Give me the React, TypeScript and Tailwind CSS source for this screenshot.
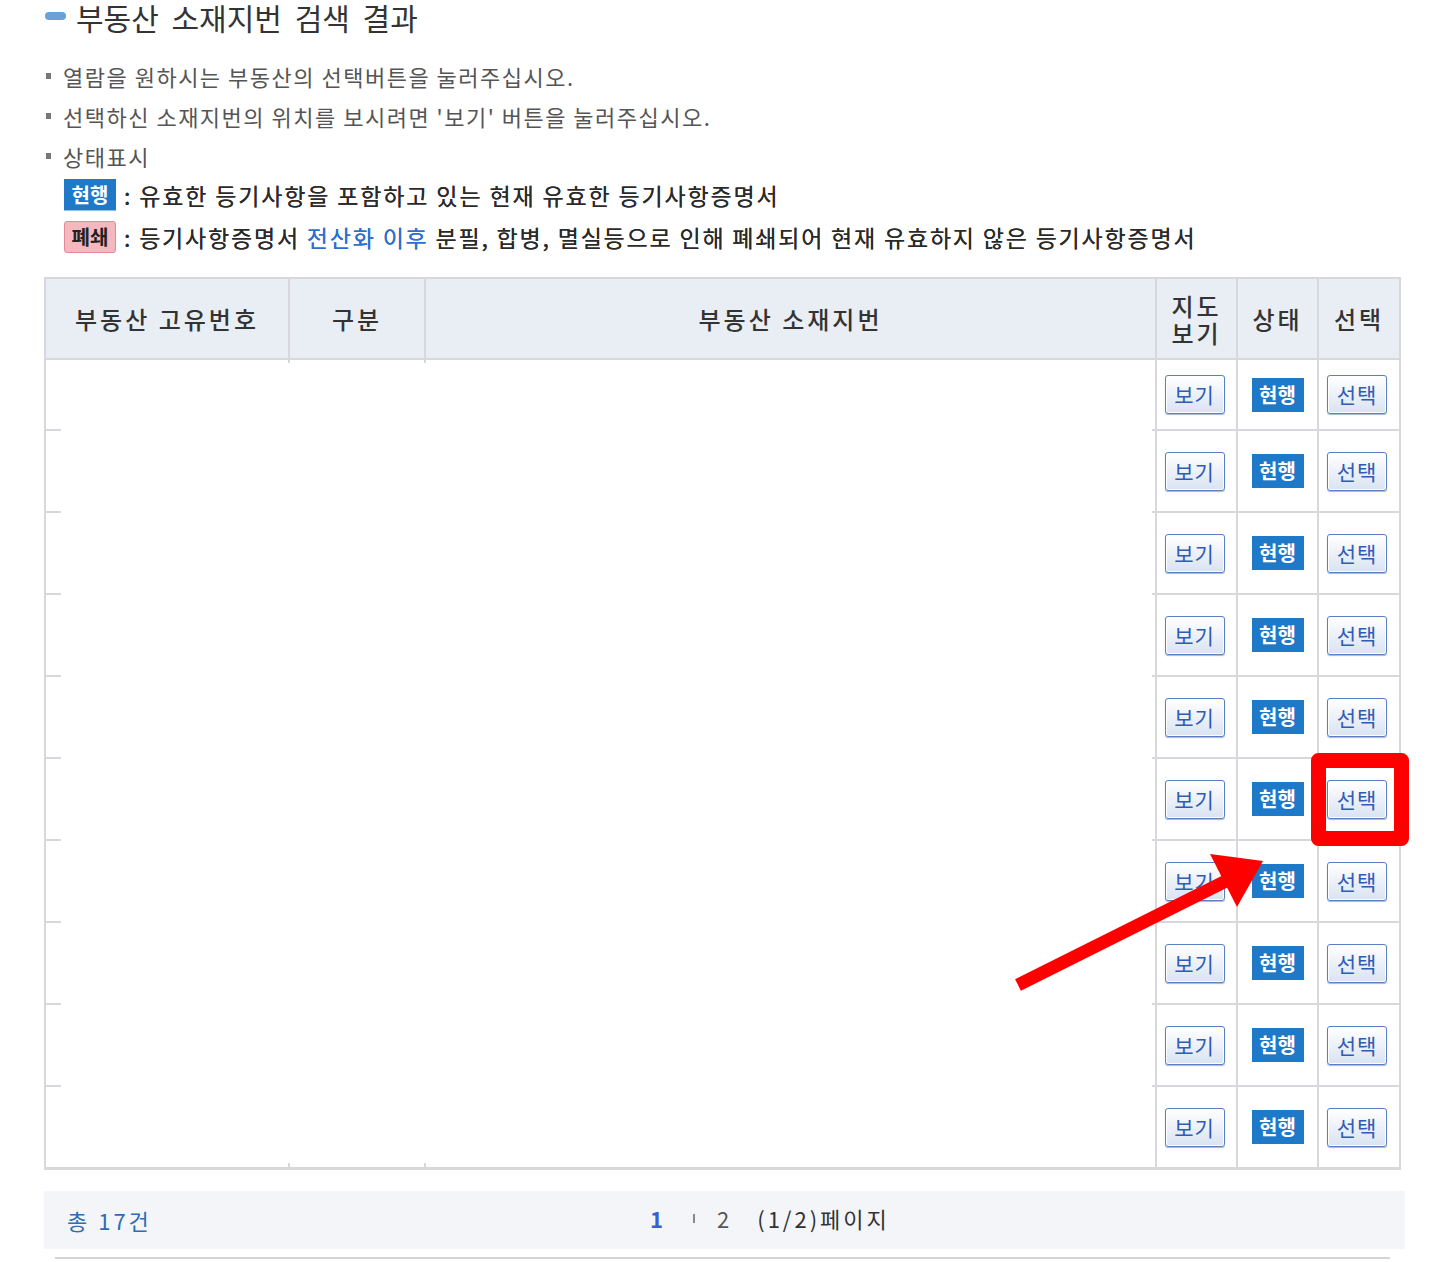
import React from "react";

const BORDER = "border-[#d7d7dc]";

function Btn({ label }: { label: string }) {
  return (
    <div className="flex h-[39px] w-[60px] items-center justify-center rounded-[3px] border border-[#5a7fc2] bg-linear-to-b from-white to-[#d9e3f2] text-[21px] leading-none tracking-[1px] text-[#2f5cb4] shadow-[inset_0_0_0_1px_rgba(255,255,255,0.95),0_1px_1px_rgba(60,90,150,0.45)]">
      {label}
    </div>
  );
}

function Badge() {
  return (
    <div className="flex h-[34px] w-[52px] items-center justify-center bg-[#1f79c9] text-[20px] font-bold leading-none text-white">
      현행
    </div>
  );
}

function Row({ index, total }: { index: number; total: number }) {
  const first = index === 0;
  const last = index === total - 1;
  const h = first ? "h-[71px]" : last ? "h-[80px]" : "h-[82px]";
  const rb = last ? "" : "border-b-2";
  return (
    <div className={`flex ${h}`}>
      <div className="flex w-[1109px] flex-col justify-between">
        {first ? (
          <div className="flex">
            <div className="w-[242px]" />
            <div className="h-[3px] w-[2px] bg-[#d7d7dc]" />
            <div className="w-[134px]" />
            <div className="h-[3px] w-[2px] bg-[#d7d7dc]" />
          </div>
        ) : (
          <div />
        )}
        {last ? (
          <div className="flex">
            <div className="w-[242px]" />
            <div className="h-[4px] w-[2px] bg-[#d7d7dc]" />
            <div className="w-[134px]" />
            <div className="h-[4px] w-[2px] bg-[#d7d7dc]" />
          </div>
        ) : (
          <div className="flex justify-between">
            <div className="h-[2px] w-[15px] bg-[#d7d7dc]" />
            <div className="h-[2px] w-[3px] bg-[#d7d7dc]" />
          </div>
        )}
      </div>
      <div className={`flex w-[81px] items-center justify-center border-l-2 ${rb} ${BORDER} pr-[4px]`}>
        <Btn label="보기" />
      </div>
      <div className={`flex w-[81px] items-center justify-center border-l-2 ${rb} ${BORDER}`}>
        <Badge />
      </div>
      <div className={`flex w-[82px] items-center justify-center border-l-2 ${rb} ${BORDER} pr-[4px]`}>
        <Btn label="선택" />
      </div>
    </div>
  );
}

export default function App() {
  const rows = Array.from({ length: 10 }, (_, i) => i);
  const head =
    "flex items-center justify-center text-[24px] tracking-[3px] font-medium text-[#333]";
  return (
    <div className="relative h-[1262px] w-[1438px] overflow-hidden bg-white font-['Noto_Sans_CJK_KR',sans-serif]">
      {/* Title */}
      <div className="-mt-[3px] flex h-[40px] items-center pl-[45px]">
        <div className="mt-[-2px] h-[8px] w-[21px] rounded-full bg-[#6aa1d6]" />
        <div className="ml-[10px] text-[30px] leading-none text-[#333] [word-spacing:6px]">
          부동산 소재지번 검색 결과
        </div>
      </div>

      {/* Bullets */}
      <div className="mt-[19px]">
        {[
          "열람을 원하시는 부동산의 선택버튼을 눌러주십시오.",
          "선택하신 소재지번의 위치를 보시려면 '보기' 버튼을 눌러주십시오.",
          "상태표시",
        ].map((t) => (
          <div key={t} className="flex h-[40px] items-center pl-[46px]">
            <div className="mr-[12px] h-[6px] w-[5px] bg-[#777]" />
            <div className="text-[22px] leading-none tracking-[1.5px] text-[#555]">{t}</div>
          </div>
        ))}
      </div>

      {/* Legend */}
      <div className="-mt-[2px]">
        <div className="flex h-[42px] items-center pl-[64px]">
          <div className="flex h-[32px] w-[52px] items-center justify-center border-b border-[#8fc0ea] bg-[#1f79c9] text-[20px] font-bold leading-none text-white">
            현행
          </div>
          <div className="ml-[8px] text-[23px] font-normal leading-none tracking-[1.85px] text-[#2a2a2a] [text-shadow:0_0_0.3px_#333]">
            : 유효한 등기사항을 포함하고 있는 현재 유효한 등기사항증명서
          </div>
        </div>
        <div className="flex h-[42px] items-center pl-[64px]">
          <div className="flex h-[32px] w-[52px] items-center justify-center rounded-[3px] border border-[#e08c97] bg-[#f6b8bf] text-[20px] font-bold leading-none text-[#222]">
            폐쇄
          </div>
          <div className="ml-[8px] text-[23px] font-normal leading-none tracking-[1.8px] text-[#2a2a2a] [text-shadow:0_0_0.3px_#333]">
            : 등기사항증명서{" "}
            <span className="text-[#2d6fd0] [text-shadow:0_0_0.3px_#2d6fd0]">전산화 이후</span> 분필, 합병, 멸실등으로 인해 폐쇄되어 현재 유효하지 않은 등기사항증명서
          </div>
        </div>
      </div>

      {/* Table */}
      <div className={`ml-[44px] mt-[19px] w-[1357px] border-x-2 border-t-2 border-b-[3px] ${BORDER}`}>
        <div className={`grid h-[81px] grid-cols-[244px_136px_731px_81px_81px_80px] border-b-2 ${BORDER} bg-[#e9eef4]`}>
          <div className={`${head} border-r-2 ${BORDER}`}>부동산 고유번호</div>
          <div className={`${head} border-r-2 ${BORDER}`}>구분</div>
          <div className={`${head} border-r-2 ${BORDER}`}>부동산 소재지번</div>
          <div className={`${head} flex-col border-r-2 ${BORDER} leading-[27px]`}>
            <span className="block">지도</span>
            <span className="block">보기</span>
          </div>
          <div className={`${head} border-r-2 ${BORDER}`}>상태</div>
          <div className={head}>선택</div>
        </div>
        {rows.map((i) => (
          <Row key={i} index={i} total={rows.length} />
        ))}
      </div>

      {/* Footer */}
      <div className="ml-[44px] mt-[21px] flex h-[58px] w-[1361px] items-center bg-[#f4f5f8] pb-[4px] pl-[23px] text-[22px] leading-none">
        <div className="w-[583px] pt-[4px] tracking-[3px] text-[#2c6db5]">총 17건</div>
        <div className="flex items-center text-[#333]">
          <span className="font-bold text-[#3b5fd0]">1</span>
          <span className="ml-[30px] h-[9px] w-[2px] bg-[#888]" />
          <span className="ml-[22px] text-[#555]">2</span>
          <span className="ml-[28px] tracking-[3px]">(1/2)페이지</span>
        </div>
      </div>
      <div className="ml-[55px] mt-[8px] h-[2px] w-[1335px] bg-[#d4d4d6]" />

      {/* Annotation overlay */}
      <svg
        className="pointer-events-none absolute left-0 top-0"
        width={1438}
        height={1262}
        viewBox="0 0 1438 1262"
      >
        <rect
          x={1318.5}
          y={760.5}
          width={83}
          height={78}
          fill="none"
          stroke="#ff0000"
          strokeWidth={15}
          strokeLinejoin="round"
        />
        <line x1={1018} y1={985} x2={1228} y2={880} stroke="#ff0000" strokeWidth={13} />
        <polygon points="1263,861 1210,854 1237,907" fill="#ff0000" />
      </svg>
    </div>
  );
}
